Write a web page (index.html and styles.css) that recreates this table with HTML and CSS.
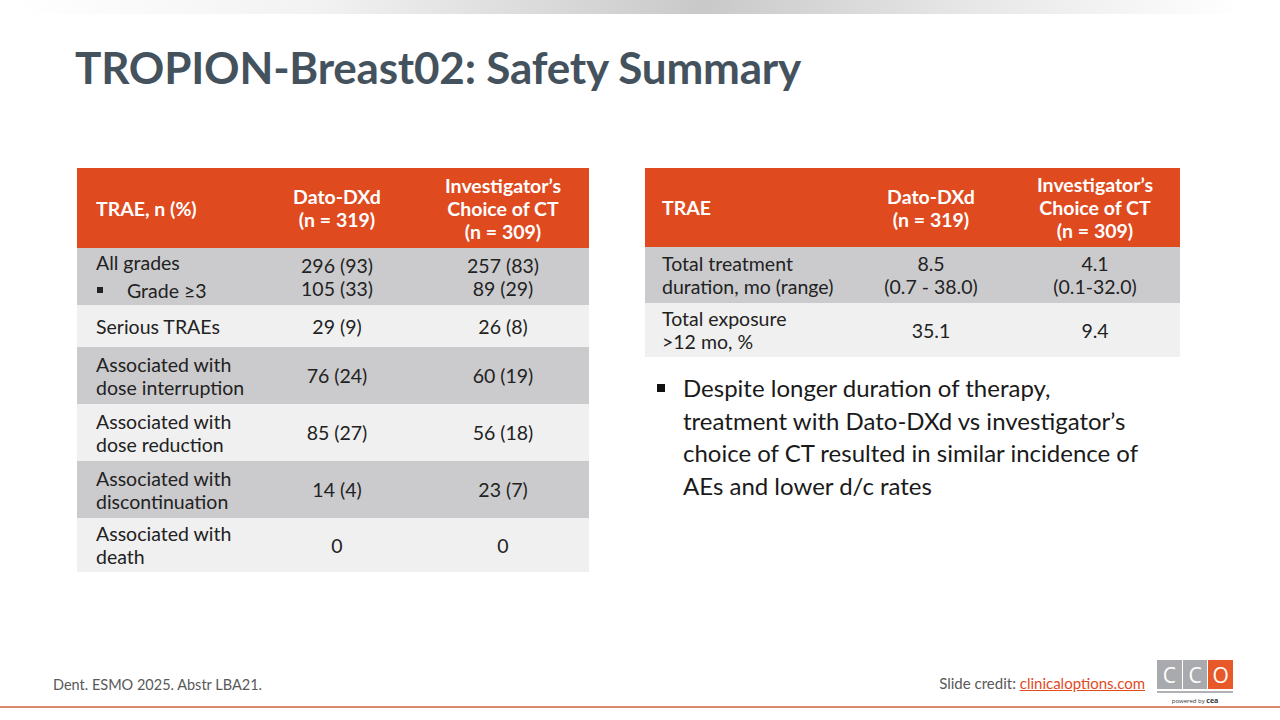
FILE: index.html
```html
<!DOCTYPE html>
<html lang="en">
<head>
<meta charset="utf-8">
<title>TROPION-Breast02: Safety Summary</title>
<link rel="stylesheet" href="styles.css">
</head>
<body>
<div class="slide">
  <div class="topbar"></div>
  <h1 class="title">TROPION-Breast02: Safety Summary</h1>
  <div class="content">
    <table class="tbl tbl-left">
      <colgroup><col class="c1"><col class="c2"><col class="c3"></colgroup>
      <thead>
        <tr class="head"><th class="lbl">TRAE, n (%)</th><th>Dato-DXd<br>(n = 319)</th><th>Investigator’s<br>Choice of CT<br>(n = 309)</th></tr>
      </thead>
      <tbody>
        <tr class="dark r57"><td class="lbl">All grades<br><span class="sub"><span class="sq"></span>Grade ≥3</span></td><td>296 (93)<br>105 (33)</td><td>257 (83)<br>89 (29)</td></tr>
        <tr class="light r42"><td class="lbl">Serious TRAEs</td><td>29 (9)</td><td>26 (8)</td></tr>
        <tr class="dark r57"><td class="lbl">Associated with<br>dose interruption</td><td>76 (24)</td><td>60 (19)</td></tr>
        <tr class="light r57"><td class="lbl">Associated with<br>dose reduction</td><td>85 (27)</td><td>56 (18)</td></tr>
        <tr class="dark r57"><td class="lbl">Associated with<br>discontinuation</td><td>14 (4)</td><td>23 (7)</td></tr>
        <tr class="light r54"><td class="lbl">Associated with<br>death</td><td>0</td><td>0</td></tr>
      </tbody>
    </table>
    <div class="right">
      <table class="tbl tbl-right">
        <colgroup><col class="d1"><col class="d2"><col class="d3"></colgroup>
        <thead>
          <tr class="head"><th class="lbl">TRAE</th><th>Dato-DXd<br>(n = 319)</th><th>Investigator’s<br>Choice of CT<br>(n = 309)</th></tr>
        </thead>
        <tbody>
          <tr class="dark r56"><td class="lbl">Total treatment<br>duration, mo (range)</td><td>8.5<br>(0.7 - 38.0)</td><td>4.1<br>(0.1-32.0)</td></tr>
          <tr class="light r54"><td class="lbl">Total exposure<br>&gt;12 mo, %</td><td>35.1</td><td>9.4</td></tr>
        </tbody>
      </table>
      <ul class="bullets">
        <li>Despite longer duration of therapy,<br>treatment with Dato-DXd vs investigator’s<br>choice of CT resulted in similar incidence of<br>AEs and lower d/c rates</li>
      </ul>
    </div>
  </div>
  <div class="footer">
    <div class="cite">Dent. ESMO 2025. Abstr LBA21.</div>
    <div class="credit">Slide credit: <a class="link">clinicaloptions.com</a></div>
    <div class="logo">
      <div class="boxes"><span class="box gray">C</span><span class="box gray">C</span><span class="box orange">O</span></div>
      <div class="logoline"></div>
      <div class="powered">powered by <b>cea</b></div>
    </div>
  </div>
  <div class="bottomline"></div>
</div>
</body>
</html>
```

FILE: styles.css
```css
* { box-sizing: border-box; }
html, body { margin: 0; padding: 0; background: #fff; }
body { font-family: Lato, "Open Sans", sans-serif; }

.slide {
  width: 1280px;
  height: 720px;
  display: flex;
  flex-direction: column;
  overflow: hidden;
  background: #fff;
}

.topbar {
  height: 14px;
  flex: none;
  background: linear-gradient(90deg, #ffffff 1%, #f2f2f2 25%, #c9c9c9 55%, #e6e6e6 75%, #ffffff 97%);
}

.title {
  margin: 26px 0 0 75px;
  font-family: Lato, sans-serif;
  font-weight: 700;
  font-size: 44px;
  line-height: 54px;
  color: #44525e;
  letter-spacing: -0.2px;
}

.content {
  display: flex;
  align-items: flex-start;
  margin-top: 74px;
  padding-left: 77px;
}

.tbl {
  border-collapse: collapse;
  table-layout: fixed;
  font-size: 19.5px;
  line-height: 23px;
  color: #222;
}
.tbl-left { width: 512px; }
.c1 { width: 180px; }
.c2 { width: 160px; }
.c3 { width: 172px; }

.right { margin-left: 56px; width: 535px; }
.tbl-right { width: 535px; }
.d1 { width: 207px; }
.d2 { width: 158px; }
.d3 { width: 170px; }

.tbl th, .tbl td {
  padding: 0;
  text-align: center;
  vertical-align: middle;
}
.tbl .lbl { text-align: left; padding-left: 19px; }
.tbl-right .lbl { padding-left: 17px; }

.head { height: 80px; background: #df4a1f; }
.tbl-right .head { height: 79px; }
.head th { color: #fff; font-weight: 700; }

.dark { background: #cbcbcd; }
.light { background: #f0f0f0; }
.r57 { height: 57px; }
.r42 { height: 42px; }
.r54 { height: 54px; }
.r56 { height: 56px; }

.sub { display: inline-flex; align-items: center; }
.sq {
  display: inline-block;
  width: 6px;
  height: 6px;
  background: #222;
  margin: 0 24px 0 1px;
}

.bullets {
  list-style: none;
  margin: 15px 0 0 0;
  padding: 0 0 0 38px;
  font-size: 24px;
  line-height: 32.5px;
  color: #1a1a1a;
  white-space: nowrap;
}
.bullets li { position: relative; }
.bullets li::before {
  content: "";
  position: absolute;
  left: -26px;
  top: 12px;
  width: 8px;
  height: 8px;
  background: #111;
}

.footer {
  margin-top: auto;
  display: flex;
  align-items: flex-start;
  padding-left: 53px;
  height: 46px;
}
.cite {
  font-size: 14.5px;
  color: #595959;
  margin-top: 16px;
}
.credit {
  margin-left: auto;
  font-size: 15px;
  color: #595959;
  margin-top: 14px;
}
.link { color: #e04a1f; text-decoration: underline; }
.logo {
  margin-left: 12px;
  margin-right: 47px;
  width: 76px;
  display: flex;
  flex-direction: column;
  align-items: stretch;
}
.boxes { display: flex; gap: 1px; height: 29px; }
.box {
  flex: 1;
  display: flex;
  align-items: center;
  justify-content: center;
  font-family: "Open Sans", sans-serif;
  font-size: 21px;
  color: #fff;
  font-weight: 400;
}
.gray { background: #a8aaad; }
.orange { background: #e8592a; }
.logoline { height: 2px; background: #b0b2b5; margin-top: 2px; }
.powered {
  font-size: 6px;
  line-height: 8px;
  text-align: center;
  color: #333;
  margin-top: 4px;
  font-family: "Open Sans", sans-serif;
}
.powered b { font-size: 7px; }

.bottomline {
  height: 2px;
  background: #d98a6c;
  margin-bottom: 12px;
  flex: none;
}
```
